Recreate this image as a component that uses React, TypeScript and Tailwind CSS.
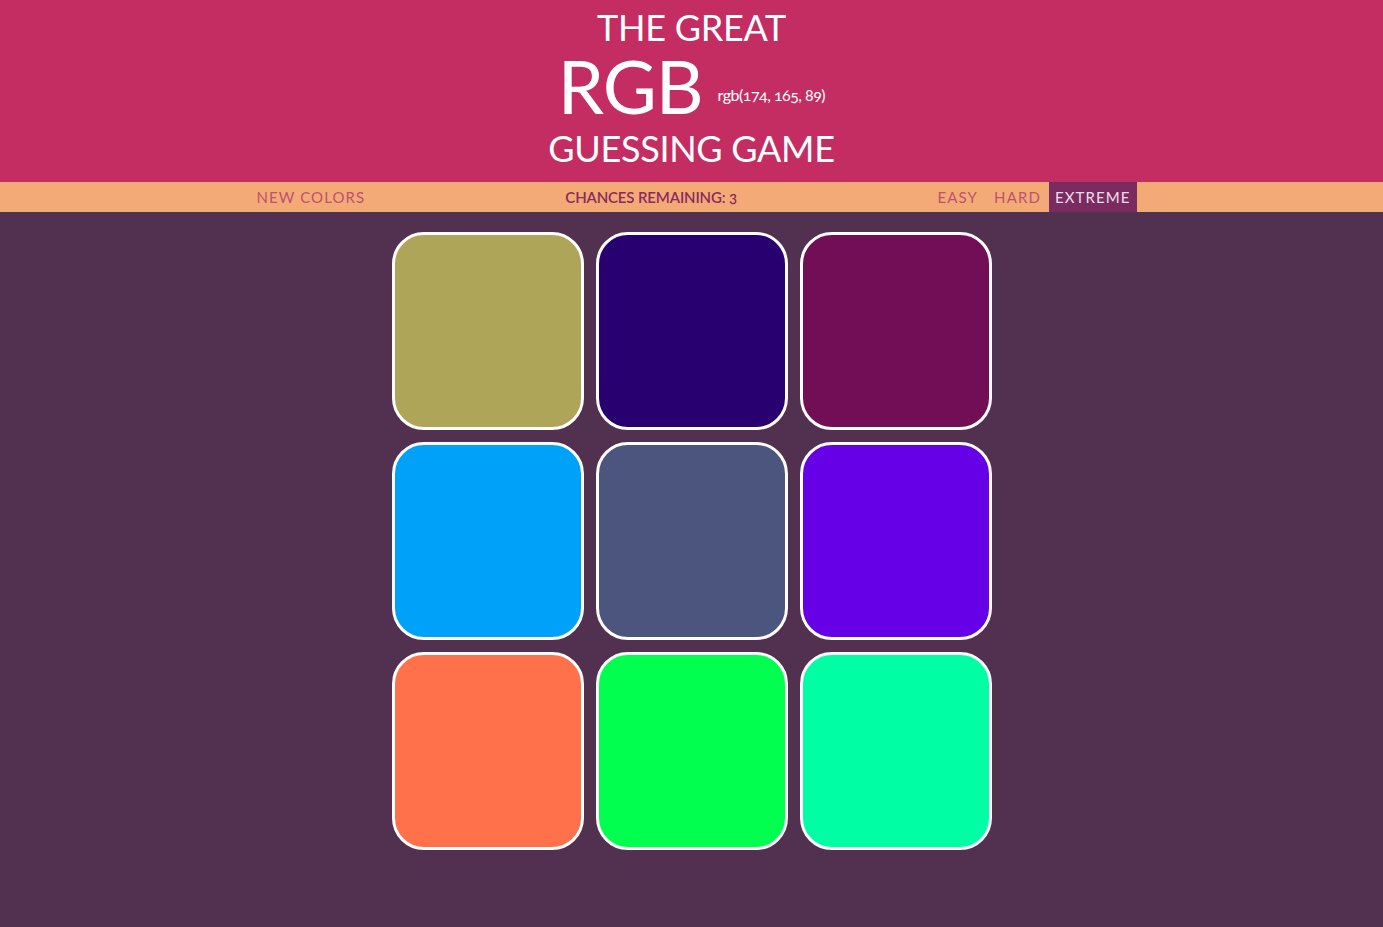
import React, { useState } from 'react';

const colors = [
    '#aea559',
    '#28006f',
    '#720e55',
    '#00a2f9',
    '#4c557e',
    '#6500e7',
    '#ff714b',
    '#00ff4f',
    '#00ffa5',
];

const App: React.FC = () => {
    const [mode, setMode] = useState<string>('EXTREME');

    return (
        <div className="min-h-[927px] bg-[#52304f] font-['Lato','Open_Sans',sans-serif] oldstyle-nums">
            {/* header */}
            <header className="bg-[#c42d62] h-[182px] flex flex-col items-center text-white pt-[7px]">
                <h1 className="text-[36px] leading-[40px] tracking-[-0.3px]">THE GREAT</h1>
                <div className="mt-[1px] h-[76px] flex items-start">
                    <span className="text-[74px] leading-[76px] tracking-[-1px]">RGB</span>
                    <span className="ml-[15px] mt-[37px] text-[16px] leading-[20px] whitespace-nowrap tracking-[-0.5px]">
                        rgb(174, 165, 89)
                    </span>
                </div>
                <h2 className="mt-[4px] text-[36px] leading-[40px] tracking-[-0.3px]">GUESSING GAME</h2>
            </header>

            {/* nav */}
            <nav className="bg-[#f3aa77] h-[30px]">
                <div className="w-[890px] mx-auto h-full flex items-center text-[15px] tracking-[1.1px]">
                    <button className="px-[10px] h-full text-[#c0516e]">NEW COLORS</button>
                    <span className="ml-[190px] text-[#8b2a5c] tracking-[-0.15px] font-semibold">
                        CHANCES REMAINING: 3
                    </span>
                    <div className="ml-auto flex h-full">
                        {['EASY', 'HARD', 'EXTREME'].map((m) => (
                            <button
                                key={m}
                                onClick={() => setMode(m)}
                                className={
                                    mode === m
                                        ? 'px-[6px] h-full bg-[#7a2c60] text-[#f4dcef]'
                                        : 'px-[8px] h-full text-[#c0516e]'
                                }
                            >
                                {m}
                            </button>
                        ))}
                    </div>
                </div>
            </nav>

            {/* squares */}
            <div className="w-[602px] px-[1px] mx-auto pt-[20px] grid grid-cols-3 gap-[12px]">
                {colors.map((c) => (
                    <div
                        key={c}
                        className="h-[198px] rounded-[32px] border-[3px] border-white"
                        style={{ backgroundColor: c }}
                    />
                ))}
            </div>
        </div>
    );
};

export default App;
